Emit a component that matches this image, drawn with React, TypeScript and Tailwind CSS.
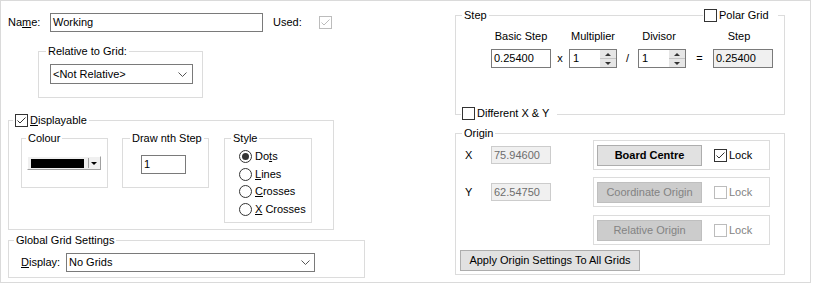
import type { ReactNode } from 'react';

function Check({ checked = false, disabled = false }: { checked?: boolean; disabled?: boolean }) {
  const line = disabled ? '#bcbcbc' : '#333333';
  return (
    <span
      className={`w-[13px] h-[13px] flex-none border bg-white ${disabled ? 'border-[#bcbcbc]' : 'border-[#333333]'}`}
    >
      {checked && (
        <svg width="11" height="11" viewBox="0 0 11 11" className="block">
          <polyline points="1.5,5.5 4,8 9.5,2.5" fill="none" stroke={line} strokeWidth="1" />
        </svg>
      )}
    </span>
  );
}

function Radio({ checked = false }: { checked?: boolean }) {
  return (
    <span className="w-[13px] h-[13px] flex-none rounded-full border border-[#333333] bg-white flex items-center justify-center">
      {checked && <span className="w-[7px] h-[7px] rounded-full bg-[#333333]" />}
    </span>
  );
}

function Chevron() {
  return (
    <svg width="9" height="5" viewBox="0 0 9 5" className="block">
      <polyline points="0.5,0.5 4.5,4.5 8.5,0.5" fill="none" stroke="#555555" strokeWidth="1" />
    </svg>
  );
}

function Group({
  title,
  className,
  legendClass,
  children,
}: {
  title: ReactNode;
  className: string;
  legendClass: string;
  children?: ReactNode;
}) {
  return (
    <fieldset className={`border border-[#dcdcdc] min-w-0 ${className}`}>
      <legend className={`px-[2px] h-[13px] leading-[13px] flex items-center ${legendClass}`}>{title}</legend>
      {children}
    </fieldset>
  );
}

function Spin() {
  return (
    <div className="w-[48px] h-[19px] border border-[#7a7a7a] flex items-center bg-white">
      <span className="pl-[3px]">1</span>
      <div className="ml-auto w-[16px] h-full flex flex-col">
        <div className="flex-1 bg-[#e6e6e6] border-b border-[#c4c4c4] flex items-center justify-center">
          <span className="w-0 h-0 border-x-[3px] border-x-transparent border-b-[3px] border-b-[#333333]" />
        </div>
        <div className="flex-1 bg-[#e6e6e6] flex items-center justify-center">
          <span className="w-0 h-0 border-x-[3px] border-x-transparent border-t-[3px] border-t-[#333333]" />
        </div>
      </div>
    </div>
  );
}

function OriginRow({ axis, value, button, enabled, locked, gap }: {
  axis?: string;
  value?: string;
  button: string;
  enabled: boolean;
  locked: boolean;
  gap: string;
}) {
  return (
    <div className={`flex items-center pl-[9px] ${gap}`}>
      <span className="w-[26px]">{axis}</span>
      {value ? (
        <div className="w-[60px] h-[18px] border border-[#cccccc] bg-[#f0f0f0] text-[#6d6d6d] pl-[2px] flex items-center">
          {value}
        </div>
      ) : (
        <div className="w-[60px]" />
      )}
      <div className="ml-[42px] w-[177px] h-[30px] border border-[#dcdcdc] flex items-center">
        <div
          className={`ml-[3px] w-[105px] h-[21px] border flex items-center justify-center ${
            enabled ? 'bg-[#e1e1e1] border-[#adadad] font-bold' : 'bg-[#cccccc] border-[#bfbfbf] text-[#838383]'
          }`}
        >
          {button}
        </div>
        <div className="ml-[12px] flex items-center">
          <Check checked={locked} disabled={!enabled} />
          <span className={`ml-[2px] ${enabled ? '' : 'text-[#838383]'}`}>Lock</span>
        </div>
      </div>
    </div>
  );
}

export default function App() {
  return (
    <div className="w-[811px] h-[283px] border border-[#dadada] bg-white flex text-[11px] leading-[13px] text-black font-['Liberation_Sans',Arial,sans-serif]">
      {/* left column */}
      <div className="ml-[7px] w-[357px] flex flex-col">
        <div className="mt-[12px] flex items-center h-[19px]">
          <span className="w-[42px]">
            Na<u>m</u>e:
          </span>
          <div className="w-[213px] h-[19px] border border-[#7a7a7a] pl-[2px] flex items-center">Working</div>
          <span className="ml-[10px] w-[46px]">Used:</span>
          <Check checked disabled />
        </div>

        <Group title="Relative to Grid:" className="ml-[30px] mt-[13px] w-[165px] h-[53px]" legendClass="ml-[7px]">
          <div className="ml-[11px] mt-[6px] w-[143px] h-[20px] border border-[#7a7a7a] flex items-center justify-between pl-[2px] pr-[5px]">
            <span>&lt;Not Relative&gt;</span>
            <Chevron />
          </div>
        </Group>

        <Group
          title={
            <>
              <Check checked />
              <span className="ml-[2px]">
                <u>D</u>isplayable
              </span>
            </>
          }
          className="mt-[16px] w-[326px] h-[116px]"
          legendClass="ml-[4px]"
        >
          <div className="ml-[12px] mt-[5px] flex items-start">
            <Group title="Colour" className="w-[87px] h-[56px]" legendClass="ml-[4px]">
              <div className="ml-[5px] mt-[11px] w-[74px] h-[14px] bg-[#f0f0f0] border border-t-white border-l-white border-r-[#a0a0a0] border-b-[#a0a0a0] flex items-center pl-[3px]">
                <span className="w-[53px] h-[9px] bg-black" />
                <span className="ml-[4px] w-px h-[10px] bg-[#a0a0a0]" />
                <span className="ml-[2px] w-0 h-0 border-x-[3px] border-x-transparent border-t-[3px] border-t-black" />
              </div>
            </Group>
            <Group title="Draw nth Step" className="ml-[14px] w-[87px] h-[56px]" legendClass="ml-[7px]">
              <div className="ml-[18px] mt-[10px] w-[45px] h-[19px] border border-[#7a7a7a] pl-[2px] flex items-center">1</div>
            </Group>
            <Group title="Style" className="ml-[15px] w-[88px] h-[91px]" legendClass="ml-[6px]">
              <div className="ml-[14px] mt-[3px] flex flex-col">
                {[
                  [<>Do<u>t</u>s</>, true],
                  [<><u>L</u>ines</>, false],
                  [<><u>C</u>rosses</>, false],
                  [<><u>X</u> Crosses</>, false],
                ].map(([label, on], i) => (
                  <div key={i} className="h-[17.6px] flex items-center">
                    <Radio checked={on as boolean} />
                    <span className="ml-[3px]">{label as ReactNode}</span>
                  </div>
                ))}
              </div>
            </Group>
          </div>
        </Group>

        <Group title="Global Grid Settings" className="mt-[4px] w-[357px] h-[44px]" legendClass="ml-[5px]">
          <div className="ml-[12px] mt-[6px] flex items-center">
            <span className="w-[45px]">
              <u>D</u>isplay:
            </span>
            <div className="w-[249px] h-[19px] border border-[#7a7a7a] flex items-center justify-between pl-[2px] pr-[4px]">
              <span>No Grids</span>
              <Chevron />
            </div>
          </div>
        </Group>
      </div>

      {/* right column */}
      <div className="ml-[90px] w-[330px] flex flex-col">
        <div className="relative mt-[8px]">
          <Group title="Step" className="w-[330px] h-[106px]" legendClass="ml-[6px]">
            <div className="ml-[35px] mt-[8px] grid grid-cols-[60px_18px_48px_21px_48px_27px_60px] gap-y-[6px] items-center">
              <span className="justify-self-center">Basic Step</span>
              <span />
              <span className="justify-self-center">Multiplier</span>
              <span />
              <span className="justify-self-center pr-[6px]">Divisor</span>
              <span />
              <span className="justify-self-center pr-[8px]">Step</span>

              <div className="h-[19px] border border-[#7a7a7a] pl-[2px] flex items-center">0.25400</div>
              <span className="text-center">x</span>
              <Spin />
              <span className="text-center">/</span>
              <Spin />
              <span className="text-center">=</span>
              <div className="h-[19px] border border-[#7a7a7a] bg-[#f0f0f0] pl-[2px] flex items-center">0.25400</div>
            </div>
          </Group>
          <div className="absolute top-0 left-[248px] bg-white pl-[1px] pr-[9px] h-[13px] flex items-center">
            <Check />
            <span className="ml-[2px]">Polar Grid</span>
          </div>
          <div className="absolute top-[98px] left-[6px] bg-white pl-[1px] pr-[8px] h-[13px] flex items-center">
            <Check />
            <span className="ml-[2px]">Different X &amp; Y</span>
          </div>
        </div>

        <Group title="Origin" className="mt-[12px] w-[330px] h-[148px]" legendClass="ml-[6px]">
          <OriginRow axis="X" value="75.94600" button="Board Centre" enabled locked gap="mt-0" />
          <OriginRow axis="Y" value="62.54750" button="Coordinate Origin" enabled={false} locked={false} gap="mt-[7px]" />
          <OriginRow button="Relative Origin" enabled={false} locked={false} gap="mt-[8px]" />
          <div className="ml-[4px] mt-[5px] w-[180px] h-[21px] bg-[#e1e1e1] border border-[#adadad] flex items-center justify-center">
            Apply Origin Settings To All Grids
          </div>
        </Group>
      </div>
    </div>
  );
}
